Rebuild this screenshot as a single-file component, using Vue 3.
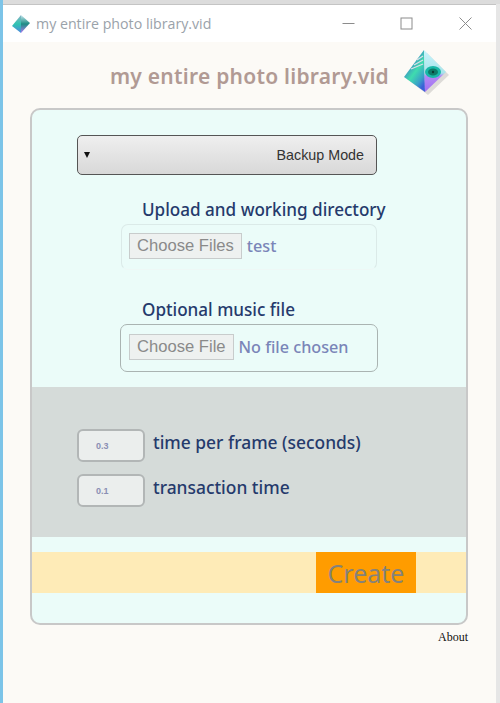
<template>
  <div class="desktop">
    <div class="window">
      <!-- Title bar -->
      <div class="titlebar">
        <svg class="title-icon" viewBox="0 0 20 20" width="20" height="20">
          <defs>
            <linearGradient id="tl" x1="0" y1="0" x2="0" y2="1">
              <stop offset="0" stop-color="#8fb0c4" />
              <stop offset="0.5" stop-color="#2fc4b0" />
              <stop offset="1" stop-color="#4f86e0" />
            </linearGradient>
            <linearGradient id="tr" x1="0" y1="0" x2="0" y2="1">
              <stop offset="0" stop-color="#c8e8f0" />
              <stop offset="0.5" stop-color="#1c8c84" />
              <stop offset="1" stop-color="#b07cf0" />
            </linearGradient>
          </defs>
          <polygon points="10,1 1,12 10,19" fill="url(#tl)" />
          <polygon points="10,1 19,9 10,19" fill="url(#tr)" />
        </svg>
        <span class="title-text">my entire photo library.vid</span>
        <div class="controls">
          <svg width="13" height="13" viewBox="0 0 13 13" class="ctl-min"><path d="M0.5 6.5H12.5" stroke="#8c8c8c" fill="none" /></svg>
          <svg width="13" height="13" viewBox="0 0 13 13" class="ctl-max"><rect x="1" y="1" width="11" height="11" stroke="#8c8c8c" fill="none" /></svg>
          <svg width="13" height="13" viewBox="0 0 13 13" class="ctl-close"><path d="M0.5 0.5L12.5 12.5M12.5 0.5L0.5 12.5" stroke="#8c8c8c" fill="none" /></svg>
        </div>
      </div>

      <div class="page">
        <header class="app-head">
          <h1 class="app-title">my entire photo library.vid</h1>
          <svg class="logo" viewBox="0 0 46 46" width="46" height="46">
            <defs>
              <linearGradient id="ll" x1="0" y1="0" x2="0.7" y2="1">
                <stop offset="0" stop-color="#5f80b0" />
                <stop offset="0.35" stop-color="#3f90c4" />
                <stop offset="0.6" stop-color="#3fdcae" />
                <stop offset="0.85" stop-color="#3aa0c8" />
                <stop offset="1" stop-color="#3a60d8" />
              </linearGradient>
              <linearGradient id="lr" x1="0" y1="0" x2="0" y2="1">
                <stop offset="0" stop-color="#c8f4fc" />
                <stop offset="0.55" stop-color="#a8e4ea" />
                <stop offset="0.62" stop-color="#b388f5" />
                <stop offset="1" stop-color="#a070f0" />
              </linearGradient>
            </defs>
            <polygon points="24,4 46,26 25,46 4,30" fill="#000" opacity="0.12" />
            <polygon points="21,1 1,28 22,43" fill="url(#ll)" />
            <polygon points="21,1 43,23 22,43" fill="url(#lr)" />
            <path d="M11 16L20 11M8 20L20 15M14 11L20 7" stroke="#d8dfe8" stroke-width="1.3" fill="none" />
            <ellipse cx="30" cy="23" rx="8" ry="6" fill="#18b8a8" />
            <ellipse cx="30" cy="23" rx="5" ry="3.6" fill="#0e7a68" />
            <circle cx="30" cy="23" r="1.2" fill="#0a3c34" />
          </svg>
        </header>

        <main class="card">
          <section class="top">
            <div class="select">
              <span class="caret"></span>
              <span>Backup Mode</span>
            </div>

            <h2 class="field-label first">Upload and working directory</h2>
            <div class="file-box faint">
              <span class="file-btn">Choose Files</span>
              <span class="file-name">test</span>
            </div>

            <h2 class="field-label second">Optional music file</h2>
            <div class="file-box solid">
              <span class="file-btn">Choose File</span>
              <span class="file-name">No file chosen</span>
            </div>
          </section>

          <section class="settings">
            <div v-for="row in rows" :key="row.label" class="setting">
              <span class="num">{{ row.value }}</span>
              <span class="setting-label">{{ row.label }}</span>
            </div>
          </section>

          <section class="action">
            <button type="button" class="create">Create</button>
          </section>
        </main>

        <div class="about">About</div>
      </div>
    </div>
  </div>
</template>

<script setup>
// Number fields in the grey panel
const rows = [
  { value: '0.3', label: 'time per frame (seconds)' },
  { value: '0.1', label: 'transaction time' }
]
</script>

<style>
html,
body {
  margin: 0;
  padding: 0;
}
</style>

<style scoped>
.desktop {
  width: 500px;
  height: 703px;
  box-sizing: border-box;
  padding: 4px 4px 0 3px;
  overflow: hidden;
  background: linear-gradient(#dcdcdc 0 4px, #e6e6e6 4px);
  box-shadow: inset 3px 0 0 #7cc4e8;
}

.window {
  height: 100%;
  display: flex;
  flex-direction: column;
  border-top: 1px solid #c4c4c4;
}

.titlebar {
  height: 37px;
  flex: none;
  background: #fff;
  display: flex;
  align-items: center;
  padding-left: 8px;
}

.title-icon {
  margin-right: 5px;
}

.title-text {
  font: 14.2px "Open Sans", "Noto Sans", sans-serif;
  color: #9aa2aa;
}

.controls {
  margin-left: auto;
  display: flex;
  align-items: center;
}

.ctl-min {
  margin-right: 45px;
}

.ctl-max {
  margin-right: 46px;
}

.ctl-close {
  margin-right: 24px;
}

.page {
  flex: 1;
  background: #fcfaf6;
  padding: 0 28px 0 27px;
}

.app-head {
  height: 66px;
  display: flex;
  align-items: center;
  justify-content: flex-end;
  padding-right: 19px;
}

.logo {
  margin-top: -7px;
}

.app-title {
  margin: 2px 14px 0 0;
  font: 600 21px "Noto Sans", sans-serif;
  color: #b19a94;
  letter-spacing: 0.25px;
}

.card {
  width: 438px;
  height: 517px;
  box-sizing: border-box;
  border: 2px solid #c8c8c8;
  border-radius: 10px;
  background: #ebfcf9;
  overflow: hidden;
}

.top {
  height: 277px;
  box-sizing: border-box;
  padding-top: 25px;
  padding-left: 45px;
}

.select {
  width: 300px;
  height: 40px;
  box-sizing: border-box;
  border: 1px solid #555;
  border-radius: 5px;
  background: linear-gradient(#efefef, #d8d8d8);
  display: flex;
  align-items: center;
  justify-content: space-between;
  padding: 0 12px 0 6px;
  font: 14.3px "Liberation Sans", Arial, sans-serif;
  color: #333;
}

.caret {
  width: 0;
  height: 0;
  border-left: 3px solid transparent;
  border-right: 3px solid transparent;
  border-top: 6px solid #111;
}

.field-label {
  margin: 0 0 0 65px;
  font: 500 17.1px/20px "Noto Sans", sans-serif;
  color: #253a6c;
}

.first {
  margin-top: 25px;
  margin-bottom: 4px;
}

.second {
  margin-top: 30px;
  margin-bottom: 4px;
}

.file-box {
  box-sizing: border-box;
  display: flex;
  align-items: center;
  padding-left: 7px;
  padding-bottom: 2px;
  border-radius: 7px;
}

.faint {
  width: 256px;
  height: 46px;
  margin-left: 44px;
  border: 1px solid #dbeae8;
  border-bottom-color: #eef8f6;
}

.solid {
  width: 258px;
  height: 48px;
  margin-left: 43px;
  padding-left: 8px;
  border: 1px solid #aab4b2;
}

.file-btn {
  box-sizing: border-box;
  height: 26px;
  display: flex;
  align-items: center;
  padding: 0 7px;
  border: 1px solid #c8cccc;
  background: #eef1f0;
  font: 16.6px "Liberation Sans", Arial, sans-serif;
  color: #8a8a8a;
}

.file-name {
  margin-left: 5px;
  font: 500 16.2px "Noto Sans", sans-serif;
  color: #7a85b8;
}

.settings {
  height: 150px;
  box-sizing: border-box;
  background: #d5dbd9;
  padding: 42px 0 0 45px;
  display: flex;
  flex-direction: column;
  gap: 12px;
}

.setting {
  display: flex;
  align-items: center;
  height: 33px;
}

.num {
  box-sizing: border-box;
  width: 68px;
  height: 33px;
  border: 2px solid #b2b6b6;
  border-radius: 6px;
  background: #ebeeed;
  display: flex;
  align-items: center;
  padding-left: 17px;
  font: bold 9px "Liberation Sans", Arial, sans-serif;
  color: #8a8fb4;
}

.setting-label {
  margin-left: 8px;
  margin-top: -7px;
  font: 500 17.4px "Noto Sans", sans-serif;
  color: #253a6c;
}

.action {
  margin-top: 15px;
  height: 41px;
  background: #feebb7;
  display: flex;
  padding-left: 284px;
}

.create {
  width: 100px;
  height: 41px;
  border: 0;
  padding: 0;
  background: #ff9c00;
  font: 25px "Noto Sans", sans-serif;
  color: #85827a;
}

.about {
  width: 438px;
  margin-top: 5px;
  text-align: right;
  font: 12px "Liberation Serif", serif;
  color: #111;
}
</style>
